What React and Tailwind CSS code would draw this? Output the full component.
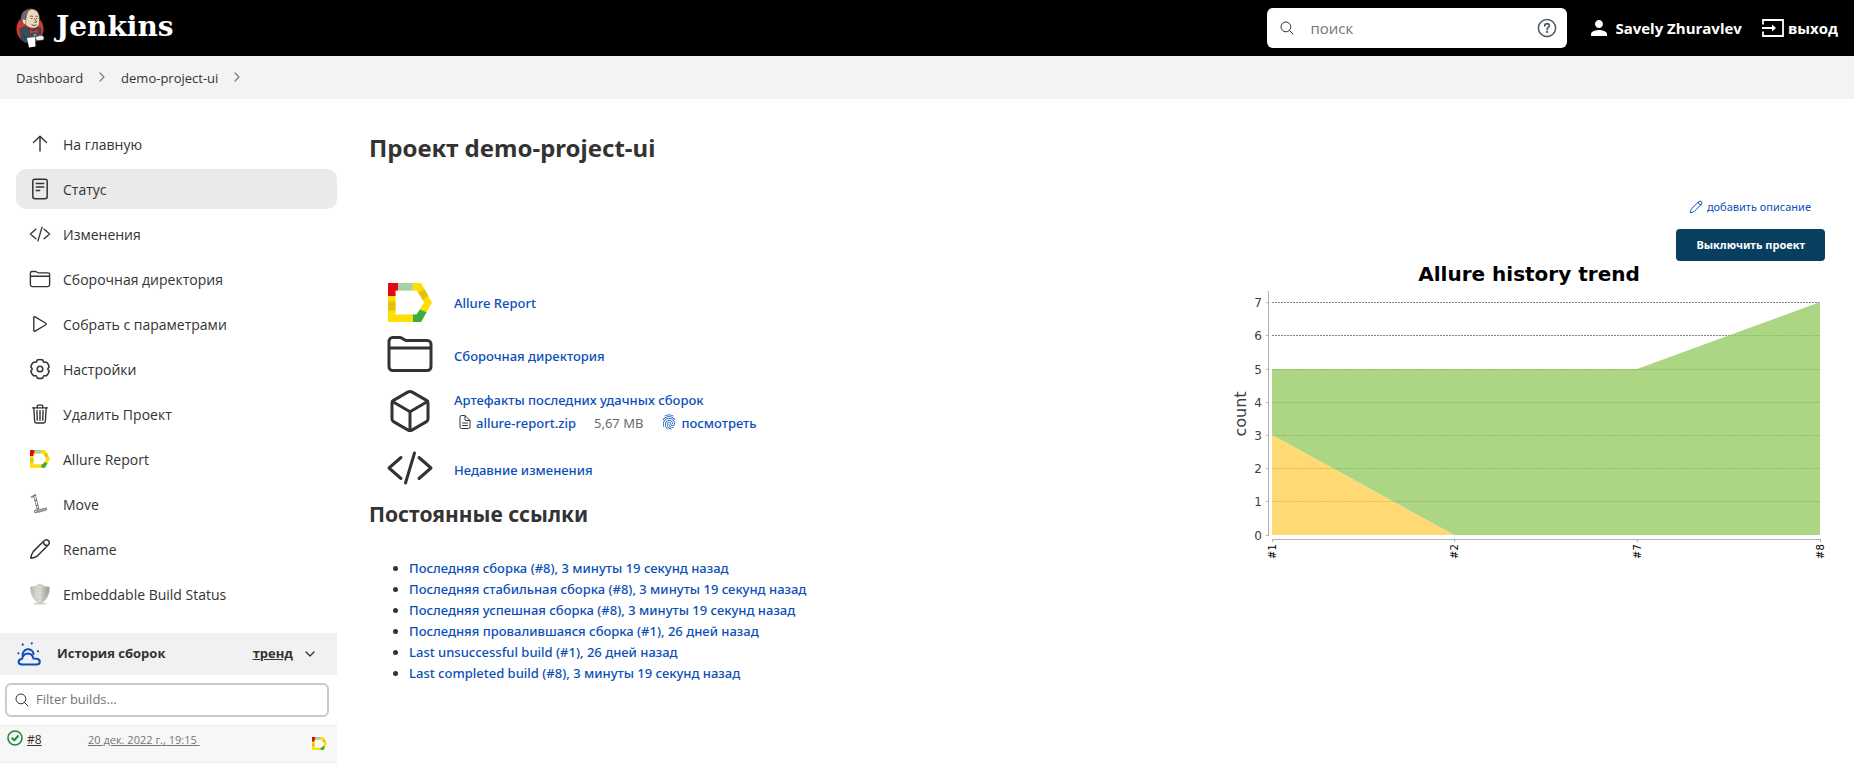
import {
  IoCodeSlashOutline, IoFolderOutline, IoPlayOutline, IoTrashOutline,
  IoCubeOutline, IoFingerPrintOutline, IoDocumentTextOutline, IoSearchOutline,
  IoChevronForwardOutline, IoChevronDownOutline,
} from "react-icons/io5";
import { MdPerson } from "react-icons/md";

function JenkinsLogo() {
  return (
    <svg viewBox="0 0 28 40" className="h-10 w-7" aria-hidden="true">
      <ellipse cx="14" cy="21" rx="13.5" ry="14" fill="#d33833" />
      <path d="M4 21 L9 18.500 L15 22 L20 19 L24.500 20 L24.500 30 L19 33 L9 34.500 L5.500 32 Z" fill="#335061" stroke="#1f2f3a" strokeWidth=".6" />
      <path d="M6.500 10 Q7 1.500 14 .8 Q22 .8 23.300 8 L23.500 16 Q21.500 20.500 17 20.300 Q11 20 8.500 15 Z" fill="#f0d6b7" stroke="#3a3330" strokeWidth=".6" />
      <path d="M5 13 Q4 5 9 2.500 Q12 .8 15 .8 Q10.500 3.500 10.300 8 L9.500 13 L7 15 Z" fill="#6d6b6d" stroke="#2b2626" strokeWidth=".5" />
      <path d="M7.500 11 Q5.500 12 7 15 Q8 17 9.500 16 L10 12 Z" fill="#f7e4cd" stroke="#3a3330" strokeWidth=".4" />
      <path d="M14 8.500 q1.500 -1 3 0 M19.500 8.500 q1.200 -.8 2.300 0 M15 10.500 h1.500 M20 10.500h1.200 M18.500 10.500 l2 3.500 -2.200 .5 M15.500 16.800 q2.500 1.400 5 0" fill="none" stroke="#3a3330" strokeWidth=".8" />
      <path d="M13 20.500 L17 23 L22.500 20.500 L22 26 L18 24.500 L14 26.500 Z" fill="#d33833" stroke="#3a1a1a" strokeWidth=".4" />
      <circle cx="19" cy="27" r="1.500" fill="#8496a1" />
      <path d="M11 30 L19 29 L19.500 38.500 L13 39.500 Z" fill="#fff" />
      <path d="M19 29.500 Q25 26 28 29 L27.500 32 L21 32.500 Z" fill="#f4f4f4" stroke="#444" strokeWidth=".5" />
      <path d="M7 26 L9 31" stroke="#1f2f3a" strokeWidth=".7" />
    </svg>
  );
}

function AllureIcon({ className }) {
  return (
    <svg viewBox="0 0 44 39" className={className} aria-hidden="true">
      <path d="M0 0H33L44 19.500 33 39H0Z M7.500 7.500V31.500H28.500L36 19.500 28.500 7.500Z" fillRule="evenodd" fill="#ffde05" />
      <path d="M0 0H10V7.500H7.500V13H0Z" fill="#e30613" />
      <path d="M10 0H24.500V7.500H10Z" fill="#a3d2a5" />
      <path d="M0 18.500H7.500V27.500H0Z" fill="#e0c112" />
      <path d="M36.500 6.200L40 12.500 35 17 30.500 9.500Z" fill="#e0c112" />
      <path d="M25 31.500H28.500L32 26.500 38.500 29.200 33 39H25Z" fill="#3bab4a" />
    </svg>
  );
}

function ArrowUpIcon({ className }) {
  return (
    <svg viewBox="0 0 22 22" className={className} fill="none" stroke="currentColor" strokeWidth="1.400" strokeLinecap="round" strokeLinejoin="round" aria-hidden="true">
      <path d="M4.500 9.500L11 3.200 17.500 9.500M11 3.500V18" />
    </svg>
  );
}

const polar = (deg, r) => {
  const a = (deg * Math.PI) / 180;
  return `${(11 + r * Math.cos(a)).toFixed(2)} ${(11 + r * Math.sin(a)).toFixed(2)}`;
};
const gearPath =
  `M${polar(-120, 7.8)}` +
  [-90, -30, 30, 90, 150, 210]
    .map((d) => `Q${polar(d - 22, 8.2)} ${polar(d - 17, 9.4)}Q${polar(d, 10)} ${polar(d + 17, 9.4)}Q${polar(d + 22, 8.2)} ${polar(d + 30, 7.8)}`)
    .join("") +
  "Z";

function GearIcon({ className }) {
  return (
    <svg viewBox="0 0 22 22" className={className} fill="none" stroke="currentColor" strokeWidth="1.500" strokeLinejoin="round" aria-hidden="true">
      <path d={gearPath} />
      <circle cx="11" cy="11" r="2.800" />
    </svg>
  );
}

function StatusIcon({ className }) {
  return (
    <svg viewBox="0 0 22 22" className={className} fill="none" stroke="currentColor" strokeWidth="1.500" strokeLinecap="round" aria-hidden="true">
      <rect x="3.800" y="1.200" width="14.400" height="19.600" rx="2.200" />
      <path d="M7.300 5.500h7.400M7.300 9h7.400M7.300 12.500h3.400" />
    </svg>
  );
}

function PencilIcon({ className }) {
  return (
    <svg viewBox="0 0 22 22" className={className} fill="none" stroke="currentColor" strokeWidth="1.500" strokeLinejoin="round" strokeLinecap="round" aria-hidden="true">
      <path d="M14.800 3 Q17.200 .6 19.400 2.600 Q21.400 4.800 19 7.200 L8.500 17.800 Q5.500 19.800 1.800 20.200 Q2.200 16.500 4.200 13.600 Z M14.400 3.600 Q14.600 7.400 18.400 7.600" />
    </svg>
  );
}

function ScooterIcon({ className }) {
  return (
    <svg viewBox="0 0 22 22" className={className} fill="none" aria-hidden="true">
      <path d="M2 4.500 L7 1.500" stroke="#c9696e" strokeWidth="1.600" />
      <path d="M5.500 2.500 L9 16" stroke="#555" strokeWidth="2.600" />
      <path d="M5.700 3 L8.700 15" stroke="#f2f2f2" strokeWidth="1.400" strokeDasharray="4 1" />
      <path d="M8 17 L17.500 15 L17.500 17 L9 19.500 Z" fill="#a3a8a3" stroke="#777" strokeWidth=".8" />
      <circle cx="6.800" cy="18.300" r="1.500" fill="#ddd" stroke="#555" strokeWidth=".8" />
    </svg>
  );
}

function ShieldIcon({ className }) {
  return (
    <svg viewBox="0 0 22 22" className={className} aria-hidden="true">
      <defs>
        <linearGradient id="shield" x1="0" x2="1">
          <stop offset="0" stopColor="#b4b4ae" />
          <stop offset=".3" stopColor="#d6d6d2" />
          <stop offset=".55" stopColor="#cfcfca" />
          <stop offset="1" stopColor="#999993" />
        </linearGradient>
      </defs>
      <ellipse cx="11" cy="20.600" rx="7" ry="1.200" fill="#d8d8d8" />
      <path d="M11 1 Q15 4 20.500 4 Q21 15 11 21 Q1 15 1.500 4 Q7 4 11 1Z" fill="url(#shield)" stroke="#c4c4c0" strokeWidth=".8" />
      <path d="M11 3.500V18.500" stroke="#f4f4f4" strokeDasharray="1.500 1.200" />
    </svg>
  );
}

function WeatherIcon() {
  return (
    <svg viewBox="0 0 24 24" className="size-6" fill="none" stroke="#0b4fb8" strokeWidth="2" strokeLinecap="round" strokeLinejoin="round" aria-hidden="true">
      <path d="M5.800 14 A5.500 5.500 0 1 1 16.600 12" />
      <path d="M5 22.500 Q1.600 22.300 1.600 19.700 Q1.800 17.200 5 16.900 Q6.200 11.500 11 11.500 Q15.600 11.700 16.400 16.600 L19.800 16.800 Q22.800 17.200 22.800 19.800 Q22.500 22.500 19.600 22.500 Z" fill="#f1f1f1" />
      <path d="M5.600 2.300l.2.400M14.800 1.200l-.1.400M1.300 11.300h.2M20.900 9.300h.2" />
    </svg>
  );
}

function SuccessIcon() {
  return (
    <svg viewBox="0 0 18 18" className="size-[18px] shrink-0" fill="none" stroke="#1c8c3f" strokeLinecap="round" strokeLinejoin="round" aria-hidden="true">
      <circle cx="9" cy="9" r="7" strokeWidth="1.600" />
      <path d="M6.200 9.200L8.300 11.300 12 7" strokeWidth="2" />
    </svg>
  );
}

function HelpIcon() {
  return (
    <svg viewBox="0 0 20 20" className="size-5" fill="none" stroke="#4d5766" strokeWidth="1.500" strokeLinecap="round" aria-hidden="true">
      <circle cx="10" cy="10" r="8.600" />
      <path d="M7.700 7.800Q7.900 5.700 10.100 5.700 12.300 5.800 12.300 7.700 12.200 8.900 11 9.600 10.100 10.200 10.100 11.400" strokeWidth="1.700" />
      <circle cx="10.100" cy="14" r=".4" />
    </svg>
  );
}

function ExitIcon() {
  return (
    <svg viewBox="0 0 22 18" className="h-[18px] w-[22px]" fill="none" stroke="currentColor" strokeWidth="1.800" aria-hidden="true">
      <path d="M1 5.500V1H21V17H1V12.500M0 9H12" />
      <path d="M10 5.500L14 9 10 12.500Z" fill="currentColor" stroke="none" />
    </svg>
  );
}

const icon = "size-[22px] shrink-0";

const tasks = [
  { label: "На главную", icon: <ArrowUpIcon className={icon} /> },
  { label: "Статус", icon: <StatusIcon className={icon} />, active: true },
  { label: "Изменения", icon: <IoCodeSlashOutline className={icon} /> },
  { label: "Сборочная директория", icon: <IoFolderOutline className={icon} /> },
  { label: "Собрать с параметрами", icon: <IoPlayOutline className={icon} /> },
  { label: "Настройки", icon: <GearIcon className={icon} /> },
  { label: "Удалить Проект", icon: <IoTrashOutline className={icon} /> },
  { label: "Allure Report", icon: <AllureIcon className="mx-px w-5 shrink-0" /> },
  { label: "Move", icon: <ScooterIcon className={icon} /> },
  { label: "Rename", icon: <PencilIcon className={icon} /> },
  { label: "Embeddable Build Status", icon: <ShieldIcon className={icon} /> },
];

const permalinks = [
  "Последняя сборка (#8), 3 минуты 19 секунд назад",
  "Последняя стабильная сборка (#8), 3 минуты 19 секунд назад",
  "Последняя успешная сборка (#8), 3 минуты 19 секунд назад",
  "Последняя провалившаяся сборка (#1), 26 дней назад",
  "Last unsuccessful build (#1), 26 дней назад",
  "Last completed build (#8), 3 минуты 19 секунд назад",
];

function Header() {
  return (
    <header className="flex h-14 items-center bg-black px-4 text-white">
      <a href="#" className="flex items-center gap-3">
        <JenkinsLogo />
        <span className="pb-0.5 font-['DejaVu_Serif',serif] text-[28px] leading-8 font-bold">Jenkins</span>
      </a>
      <form className="ml-auto flex h-10 w-[300px] items-center rounded-md bg-white pr-2.5 pl-3">
        <IoSearchOutline className="size-4 shrink-0 text-[#333]" />
        <input aria-label="поиск" placeholder="поиск" className="ml-[15px] min-w-0 flex-1 text-[15px] text-[#333] outline-none placeholder:text-[#757575]" />
        <a href="#" aria-label="Help"><HelpIcon /></a>
      </form>
      <a href="#" className="ml-5 flex items-center gap-1 text-[15px] font-bold">
        <MdPerson className="size-6" />
        Savely Zhuravlev
      </a>
      <a href="#" className="ml-5 flex items-center gap-1 text-[15px] font-bold">
        <ExitIcon />
        выход
      </a>
    </header>
  );
}

function Breadcrumbs() {
  return (
    <nav className="flex h-[43px] items-center gap-3 bg-[#f3f3f3] px-4 pt-0.5 text-[13px] text-[#333]">
      <a href="#">Dashboard</a>
      <IoChevronForwardOutline className="mb-[3px] size-3.5 text-[#808080]" />
      <a href="#">demo-project-ui</a>
      <IoChevronForwardOutline className="mb-[3px] size-3.5 text-[#808080]" />
    </nav>
  );
}

function SidePanel() {
  return (
    <aside className="w-[337px] shrink-0">
      <nav className="flex flex-col gap-[5px] pt-[25px] pl-4">
        {tasks.map((t) => (
          <a key={t.label} href="#" className={`flex h-10 items-center gap-3 rounded-[10px] px-[13px] text-sm ${t.active ? "bg-[#eaeaea]" : ""}`}>
            {t.icon}
            <span className="pt-0.5">{t.label}</span>
          </a>
        ))}
      </nav>
      <section className="mt-[19px]">
        <div className="flex h-[42px] items-center bg-[#f1f1f1] pr-5 pl-[17px] text-[13px] font-bold">
          <WeatherIcon />
          <h2 className="ml-4">История сборок</h2>
          <a href="#" className="ml-auto underline">тренд</a>
          <IoChevronDownOutline className="ml-2.5 size-3.5" />
        </div>
        <div className="mt-2 mr-2 ml-[5px] flex h-[34px] items-center gap-1.5 rounded-md border-2 border-[#c3ccd1] bg-white px-[7px]">
          <IoSearchOutline className="size-4 shrink-0" />
          <input aria-label="Filter builds" placeholder="Filter builds..." className="min-w-0 flex-1 text-[13px] outline-none placeholder:text-[#757575]" />
        </div>
        <div className="mt-2 flex h-[38px] items-start border-y border-[#eeeeee] bg-[#f7f7f7] pt-[3px] pr-2.5 pl-1.5">
          <SuccessIcon />
          <a href="#" className="ml-[3px] w-[61px] pt-[3px] text-xs underline">#8</a>
          <a href="#" className="pt-[3px] text-[11px] text-[#757575] underline">20 дек. 2022 г., 19:15&nbsp;</a>
          <AllureIcon className="mt-2 ml-auto w-[15px]" />
        </div>
      </section>
    </aside>
  );
}

const gridValues = [0, 1, 2, 3, 4, 5, 6, 7];
const yOf = (v) => Math.round(273.6 - v * 33.2) + 0.5;

function TrendChart() {
  return (
    <svg viewBox="0 0 600 310" className="-mr-1 h-[310px] w-[600px] font-['DejaVu_Sans',sans-serif]" role="img" aria-label="Allure history trend">
      <text x="300" y="20" textAnchor="middle" className="text-[20px] font-bold" fill="#000">Allure history trend</text>
      {gridValues.slice(1).map((v) => (
        <line key={v} x1="43" x2="591" y1={yOf(v)} y2={yOf(v)} stroke="#808080" strokeDasharray="2 1" />
      ))}
      <polygon points="43,108 408,108 591,41 591,274 225,274 43,174" fill="#97cc64" fillOpacity=".8" />
      <polygon points="43,174 225,274 43,274" fill="#ffd973" />
      {[1, 2].map((v) => (
        <line key={v} x1="43" x2={225 - v * 60} y1={yOf(v)} y2={yOf(v)} stroke="#e3ba60" strokeDasharray="2 1" />
      ))}
      <path d="M39.500 30V275M43 278.500H592" stroke="#b0b0b0" fill="none" />
      {gridValues.map((v) => (
        <g key={v}>
          <path d={`M37 ${yOf(v)}h2`} stroke="#b0b0b0" />
          <text x="33" y={yOf(v) + 4.5} textAnchor="end" className="text-[12px]" fill="#404040">{v}</text>
        </g>
      ))}
      <text transform="translate(17 153) rotate(-90)" textAnchor="middle" className="text-[16px]" fill="#404040">count</text>
      {[["#1", 43], ["#2", 225], ["#7", 408], ["#8", 591]].map(([t, x]) => (
        <g key={t}>
          <path d={`M${x + 0.5} 279v2`} stroke="#b0b0b0" />
          <text transform={`translate(${x + 4} 298) rotate(-90)`} className="text-[10px]" fill="#000">{t}</text>
        </g>
      ))}
    </svg>
  );
}

const link = "text-[13px] font-medium text-[#0b4fb8]";
const big = "size-12 shrink-0";

function Main() {
  return (
    <main className="min-w-0 flex-1 pr-[29px] pl-8 font-['Noto_Sans',sans-serif]">
      <h1 className="pt-[31px] text-2xl leading-9 font-bold">Проект demo-project-ui</h1>
      <div className="flex items-start justify-between pt-[31px]">
        <div>
          <ul className="pt-[79px] pl-[17px]">
            <li className="flex h-[52px] items-center gap-5">
              <AllureIcon className="mx-0.5 w-11 shrink-0" />
              <a href="#" className={`${link} pt-1`}>Allure Report</a>
            </li>
            <li className="flex h-[52px] items-center gap-5">
              <IoFolderOutline className={big} />
              <a href="#" className={`${link} pt-1.5`}>Сборочная директория</a>
            </li>
            <li className="flex h-[62px] items-center gap-5">
              <IoCubeOutline className={big} />
              <div className="pt-px leading-[23px]">
                <a href="#" className={link}>Артефакты последних удачных сборок</a>
                <div className="flex items-center pl-[3px]">
                  <IoDocumentTextOutline className="mr-[3px] mb-1 size-4" />
                  <a href="#" className={link}>allure-report.zip</a>
                  <span className="ml-[18px] text-[13px] text-[#6b6b6b]">5,67 MB</span>
                  <a href="#" className={`${link} ml-[18px] flex items-center gap-1`}>
                    <IoFingerPrintOutline className="mb-1 size-4" />
                    посмотреть
                  </a>
                </div>
              </div>
            </li>
            <li className="flex h-[52px] items-center gap-5">
              <IoCodeSlashOutline className={big} />
              <a href="#" className={`${link} pt-1.5`}>Недавние изменения</a>
            </li>
          </ul>
          <h2 className="pt-1 text-[21px] leading-8 font-bold">Постоянные ссылки</h2>
          <ul className="list-disc pt-7 pl-10 text-[13px] leading-[21px]">
            {permalinks.map((p) => (
              <li key={p}><a href="#" className="font-medium text-[#0b4fb8]">{p}</a></li>
            ))}
          </ul>
        </div>
        <div className="flex flex-col items-end">
          <a href="#" className="mr-3.5 flex h-5 items-center gap-1 text-[11px] text-[#0b4fb8]">
            <PencilIcon className="size-3.5" />
            добавить описание
          </a>
          <button className="mt-3 h-8 rounded bg-[#083f61] px-5 text-[11px] font-bold text-white">Выключить проект</button>
          <TrendChart />
        </div>
      </div>
    </main>
  );
}

export default function App() {
  return (
    <div className="min-h-screen bg-white font-['Open_Sans','Noto_Sans',sans-serif] text-[#333]">
      <Header />
      <Breadcrumbs />
      <div className="flex">
        <SidePanel />
        <Main />
      </div>
    </div>
  );
}
